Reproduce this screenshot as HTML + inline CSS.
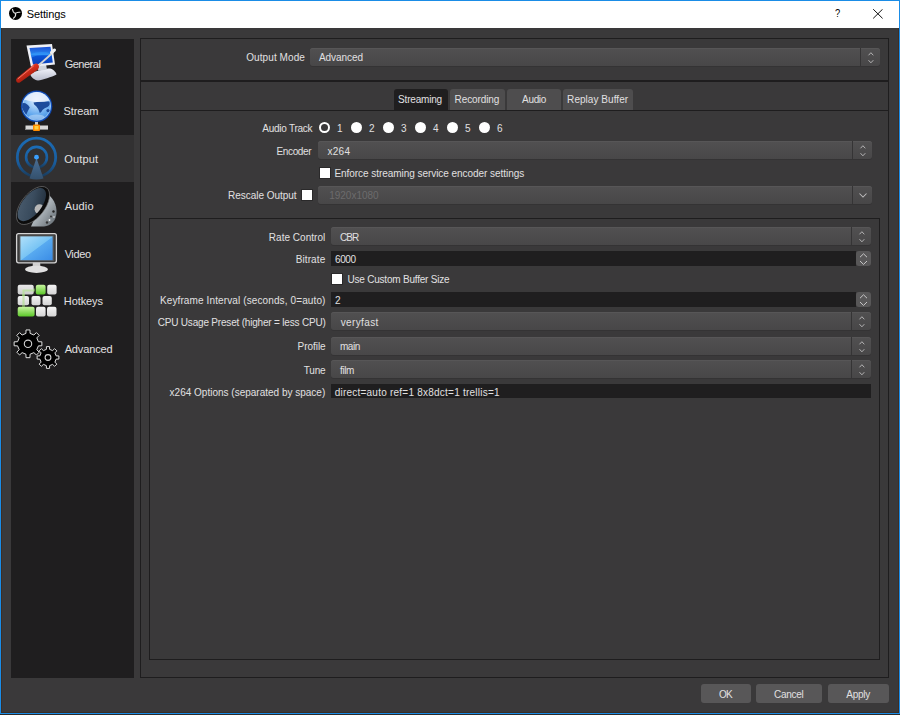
<!DOCTYPE html>
<html><head><meta charset="utf-8"><style>
*{margin:0;padding:0;box-sizing:border-box}
html,body{width:900px;height:715px;overflow:hidden;background:#2b2b2b}
body{position:relative;font-family:"Liberation Sans",sans-serif;color:#e1e0e1;font-size:10px}
.a{position:absolute}
.t{position:absolute;white-space:nowrap;line-height:1}
.r{text-align:right}
#win{left:0;top:0;width:900px;height:714px;border:1px solid #1a8ce6;background:#3a393a}
#title{left:1px;top:1px;width:898px;height:27px;background:#fff;color:#000}
#side{left:11px;top:39px;width:123px;height:639px;background:#1f1e1f}
.sel{position:absolute;left:11px;top:135px;width:123px;height:47px;background:#323132}
.box{position:absolute;border:1px solid #1e1d1e}
.combo{position:absolute;background:linear-gradient(#515051,#484748);border-radius:3px;box-shadow:inset 0 1px 0 #575657,0 1px 0 #343334}
.combo.dis{background:#403f40;box-shadow:none}
.spin{position:absolute;background:#1f1e1f}
.sbtn{position:absolute;background:#585758;border-radius:3px}
.cb{position:absolute;width:10px;height:10px;background:#fff;box-shadow:0 0 0 1px #2a292a}
.btn{position:absolute;background:#585758;border-radius:3px;top:684px;height:19px}
.tab{position:absolute;top:89px;height:21px;background:#4e4d4e;border-radius:3px 3px 0 0}
.tab.on{background:#1f1e1f}
.radio{position:absolute;top:122.3px;width:11px;height:11px;border-radius:50%;background:#fff}
.radio.on{background:transparent;border:2px solid #fff}
</style></head><body>
<div id="win" class="a"></div>
<div class="a" style="left:1px;top:28px;width:898px;height:685px;border:1px solid #3b2e26;border-top:0"></div>
<div id="title" class="a"></div>
<svg class="a" style="left:8px;top:6px" width="15" height="15" viewBox="0 0 15 15">
<circle cx="7.5" cy="7.4" r="6.5" fill="#000"/>
<path d="M4.5 3.2 Q4.7 6.3 7.5 7.4 Q9.6 6 12 6.3 M7.5 7.4 Q8.3 10.4 5.4 12.2" stroke="#e4e4e4" stroke-width="1.1" fill="none" stroke-linecap="round"/>
</svg>
<div class="t" id="Settings" style="left:26.84px;top:9px;font-size:11px;letter-spacing:-0.131px;color:#000;">Settings</div>
<div class="t" style="left:834.6px;top:8.3px;font-size:11px;color:#000;transform:scaleX(0.85);transform-origin:left">?</div>
<svg class="a" style="left:873px;top:9px" width="10" height="10" viewBox="0 0 10 10"><path d="M0.2 0.2L9.6 9.4M9.6 0.2L0.2 9.4" stroke="#111" stroke-width="1"/></svg>
<div id="side" class="a"></div>
<div class="sel"></div>
<div class="t" id="s_General" style="left:64.64px;top:59px;font-size:11px;letter-spacing:-0.478px;">General</div>
<div class="t" id="s_Stream" style="left:63.52px;top:106px;font-size:11px;letter-spacing:-0.13px;">Stream</div>
<div class="t" id="s_Output" style="left:64.32px;top:154px;font-size:11px;letter-spacing:0.142px;">Output</div>
<div class="t" id="s_Audio" style="left:64.64px;top:201px;font-size:11px;letter-spacing:0.21px;">Audio</div>
<div class="t" id="s_Video" style="left:64.64px;top:249px;font-size:11px;letter-spacing:-0.39px;">Video</div>
<div class="t" id="s_Hotkeys" style="left:63.84px;top:296px;font-size:11px;letter-spacing:-0.09px;">Hotkeys</div>
<div class="t" id="s_Advanced" style="left:64.64px;top:344px;font-size:11px;letter-spacing:-0.128px;">Advanced</div>
<svg class="a" style="left:0;top:0" width="140" height="400" viewBox="0 0 140 400">
<defs>
<linearGradient id="scr1" x1="0" y1="0" x2="0" y2="1"><stop offset="0" stop-color="#1a4fd6"/><stop offset="0.45" stop-color="#2a8cf0"/><stop offset="0.5" stop-color="#0a55d8"/><stop offset="1" stop-color="#0a3fb8"/></linearGradient>
<linearGradient id="red" x1="0" y1="0" x2="0.6" y2="1"><stop offset="0" stop-color="#ff8070"/><stop offset="0.45" stop-color="#d8301e"/><stop offset="1" stop-color="#8a1408"/></linearGradient>
<radialGradient id="globe" cx="0.4" cy="0.35" r="0.7"><stop offset="0" stop-color="#e8f3ff"/><stop offset="0.45" stop-color="#8cc4f4"/><stop offset="0.85" stop-color="#3e8ee0"/><stop offset="1" stop-color="#1456b8"/></radialGradient>
<linearGradient id="ring" x1="0" y1="0" x2="0" y2="1"><stop offset="0" stop-color="#1b6cb6"/><stop offset="0.65" stop-color="#195c9c"/><stop offset="1" stop-color="#1a3c5c"/></linearGradient>
<linearGradient id="cone" x1="0" y1="0" x2="0" y2="1"><stop offset="0" stop-color="#4a6f96"/><stop offset="1" stop-color="#34506c"/></linearGradient>
<linearGradient id="vscr" x1="0" y1="0" x2="1" y2="1"><stop offset="0" stop-color="#b0e0fa"/><stop offset="0.5" stop-color="#78c4f4"/><stop offset="0.52" stop-color="#58aaf0"/><stop offset="1" stop-color="#3a8ce6"/></linearGradient>
<linearGradient id="spk" x1="0" y1="1" x2="1" y2="0"><stop offset="0" stop-color="#4c5e70"/><stop offset="0.5" stop-color="#3a4c5e"/><stop offset="1" stop-color="#1e2a36"/></linearGradient>
<linearGradient id="key" x1="0" y1="0" x2="0" y2="1"><stop offset="0" stop-color="#f4f4f4"/><stop offset="1" stop-color="#d4d4d4"/></linearGradient>
<linearGradient id="gkey" x1="0" y1="0" x2="0" y2="1"><stop offset="0" stop-color="#c8f4a0"/><stop offset="1" stop-color="#5cc82a"/></linearGradient>
</defs>
<!-- General -->
<g>
<linearGradient id="base1" x1="0" y1="0" x2="0" y2="1"><stop offset="0" stop-color="#f0f2fa"/><stop offset="1" stop-color="#b8bccc"/></linearGradient>
<path d="M30 74 C34 71 46 68.5 50 68.5 C53 69 56 72 56.5 74.5 C52 77 42 80 38 80.5 C34 80 31 77 30 74Z" fill="url(#base1)"/>
<path d="M37 66 L46 64.5 L47 69.5 L38.5 71 Z" fill="#cfd3dc"/><circle cx="33.5" cy="69" r="3" fill="#c8ccd8"/>
<path d="M26.5 45.5 L52 44 L55 64.5 L31 67 Z" fill="#eef0f6"/>
<path d="M29.5 48 L50.5 46.8 L52.8 62.6 L33 64.6 Z" fill="url(#scr1)"/>
<path d="M30.5 54 Q40 50.5 51.5 53.5 L52 56 Q40 53.5 31.3 57.5Z" fill="#3aa0ff" opacity="0.45"/>
<path d="M39 65 L53 52.5" stroke="#d4d4d4" stroke-width="1.8" stroke-linecap="round"/>
<path d="M51.5 52.5 L54.5 50" stroke="#eee" stroke-width="3" stroke-linecap="round"/>
<path d="M17 78 L34 64.2 Q36.8 62.6 38.6 65 Q40 67.6 38 69.6 L20.2 82.2 Q17.6 83.6 16.3 81.2 Q15.6 79.2 17 78Z" fill="url(#red)"/>
<path d="M18.2 78.6 L33.5 66" stroke="#ffb0a0" stroke-width="1" stroke-linecap="round" opacity="0.6"/>
</g>
<!-- Stream -->
<g>
<radialGradient id="globe2" cx="0.5" cy="0.25" r="0.8"><stop offset="0" stop-color="#eaf3ff"/><stop offset="0.35" stop-color="#a8d0f8"/><stop offset="0.7" stop-color="#62a8ee"/><stop offset="1" stop-color="#3c88de"/></radialGradient>
<rect x="35" y="120" width="3" height="6" fill="#d0d0d0"/>
<rect x="25.5" y="125.5" width="22.5" height="4.5" fill="#d8d8d8"/>
<rect x="25.5" y="129" width="22.5" height="1" fill="#8a8a8a"/>
<rect x="33" y="124.5" width="7" height="6.5" rx="1" fill="#ff8a00"/>
<rect x="34.5" y="126" width="4" height="3.5" fill="#ffd040"/>
<circle cx="36.6" cy="106.3" r="15.7" fill="#1048b0"/>
<circle cx="36.6" cy="106.3" r="14.4" fill="url(#globe2)"/>
<circle cx="36.6" cy="106.3" r="13.9" fill="none" stroke="#e4f0ff" stroke-width="0.6" opacity="0.7"/>
<path d="M33.5 102.5 Q40 101 49.5 101.5 Q50.5 105.5 47.5 107 Q44.5 108 42.5 110 Q41 113 39.8 113 Q38.5 108.5 36.2 106.3 Q33.5 104.5 33.5 102.5Z" fill="#1d4c9c"/>
<path d="M22.3 103.2 Q26.5 102 29.8 107.5 Q28 110.5 26.2 114.8 Q23.2 111.5 22 107.5Z" fill="#1d4c9c"/>
<circle cx="48" cy="110.6" r="1.6" fill="#1d4c9c"/>
<path d="M24 99.5 Q30 92.5 37 92 Q45 92.5 49.5 100.5 Q43 102.5 36 102 Q29 101 24 99.5Z" fill="#eef2fc" opacity="0.8"/>
<ellipse cx="36.6" cy="117" rx="8" ry="2.5" fill="#ffffff" opacity="0.35"/>
</g>
<!-- Output -->
<g>
<circle cx="36.5" cy="157.3" r="19.2" fill="none" stroke="url(#ring)" stroke-width="2.8"/>
<circle cx="36.5" cy="157.3" r="10.4" fill="none" stroke="url(#ring)" stroke-width="2.6"/>
<path d="M36.5 158 L43.5 178.5 Q36.5 180.5 29.5 178.5 Z" fill="url(#cone)"/>
<circle cx="36.5" cy="157.2" r="2.4" fill="#3aa0ff"/>
</g>
<!-- Audio -->
<g>
<linearGradient id="hous" x1="0" y1="0" x2="1" y2="1"><stop offset="0" stop-color="#d8dee2"/><stop offset="0.5" stop-color="#aab2b8"/><stop offset="1" stop-color="#5a6268"/></linearGradient>
<path d="M46 193 C53 197 57 205 56.5 213 C56 221 51 226 44 226.5 L31 226.5 Z" fill="url(#hous)"/>
<circle cx="53.5" cy="211.5" r="1.2" fill="#222"/><circle cx="51" cy="216.5" r="1" fill="#333"/><circle cx="47" cy="222.5" r="1.2" fill="#333"/><circle cx="54" cy="217" r="0.8" fill="#eee"/><circle cx="49.5" cy="220" r="0.9" fill="#f4f4f4"/>
<ellipse cx="33" cy="205.5" rx="11.8" ry="22.3" transform="rotate(38 33 205.5)" fill="#0c0c0c" stroke="#7a7a7a" stroke-width="0.6"/>
<ellipse cx="31.8" cy="204.6" rx="9.6" ry="19.6" transform="rotate(38 31.8 204.6)" fill="url(#spk)"/>
<clipPath id="cclip"><ellipse cx="31.8" cy="204.6" rx="9.6" ry="19.6" transform="rotate(38 31.8 204.6)"/></clipPath>
<circle cx="39.5" cy="209.2" r="4.9" fill="#b8b8b8" clip-path="url(#cclip)"/>
</g>
<!-- Video -->
<g>
<path d="M33 262 L40 262 L40.5 267 L32.5 267 Z" fill="#d0d0d0"/>
<ellipse cx="36.5" cy="269.3" rx="11.5" ry="3.6" fill="#e0e0e0"/>
<rect x="16.6" y="233.6" width="39.8" height="29.2" rx="2" fill="#3c3c3c" stroke="#d4d4d4" stroke-width="1.3"/>
<rect x="19.2" y="235.6" width="34.6" height="25.2" fill="#5a5a5a"/>
<rect x="20.4" y="236.4" width="32.2" height="23.8" fill="url(#vscr)"/>
</g>
<!-- Hotkeys -->
<g>
<path d="M23.5 307 L23.5 290 L35 290" stroke="#8ad060" stroke-width="3" fill="none" opacity="0.6"/>
<rect x="17.7" y="284.8" width="16" height="9.6" rx="2" fill="url(#key)" opacity="0.95"/>
<rect x="35.8" y="284.8" width="9.8" height="9.6" rx="2" fill="url(#gkey)"/>
<rect x="47.2" y="284.8" width="9.4" height="9.6" rx="2" fill="url(#key)"/>
<rect x="17.7" y="296" width="11.3" height="9.2" rx="2" fill="url(#key)"/>
<rect x="31.5" y="296" width="9" height="9.2" rx="2" fill="url(#key)"/>
<rect x="42.5" y="296" width="9.3" height="9.2" rx="2" fill="url(#key)"/>
<rect x="17.7" y="306.8" width="16.9" height="9.6" rx="2" fill="url(#gkey)"/>
<rect x="36" y="306.8" width="9.6" height="9.6" rx="2" fill="url(#key)"/>
<rect x="47" y="306.8" width="9.5" height="9.6" rx="2" fill="url(#key)"/>
<path d="M23.5 305 L23.5 290.5 L34 290.5" stroke="#a8e080" stroke-width="2.2" fill="none" opacity="0.55"/>
</g>
<!-- Advanced -->
<g>
<path d="M38.40 341.73 L41.86 341.83 L41.86 345.77 L38.40 345.87 L36.81 349.69 L39.20 352.21 L36.41 355.00 L33.89 352.61 L30.07 354.20 L29.97 357.66 L26.03 357.66 L25.93 354.20 L22.11 352.61 L19.59 355.00 L16.80 352.21 L19.19 349.69 L17.60 345.87 L14.14 345.77 L14.14 341.83 L17.60 341.73 L19.19 337.91 L16.80 335.39 L19.59 332.60 L22.11 334.99 L25.93 333.40 L26.03 329.94 L29.97 329.94 L30.07 333.40 L33.89 334.99 L36.41 332.60 L39.20 335.39 L36.81 337.91Z" fill="#000" stroke="#e0e0e0" stroke-width="1" stroke-linejoin="round"/>
<circle cx="28" cy="343.8" r="3.7" fill="none" stroke="#d0d0d0" stroke-width="1.1"/>
<path d="M56.14 355.88 L58.89 355.95 L58.89 359.05 L56.14 359.12 L54.90 362.11 L56.80 364.10 L54.60 366.30 L52.61 364.40 L49.62 365.64 L49.55 368.39 L46.45 368.39 L46.38 365.64 L43.39 364.40 L41.40 366.30 L39.20 364.10 L41.10 362.11 L39.86 359.12 L37.11 359.05 L37.11 355.95 L39.86 355.88 L41.10 352.89 L39.20 350.90 L41.40 348.70 L43.39 350.60 L46.38 349.36 L46.45 346.61 L49.55 346.61 L49.62 349.36 L52.61 350.60 L54.60 348.70 L56.80 350.90 L54.90 352.89Z" fill="#000" stroke="#e0e0e0" stroke-width="1" stroke-linejoin="round"/>
<circle cx="48" cy="357.5" r="2.9" fill="none" stroke="#d0d0d0" stroke-width="1.1"/>
</g>
</svg>
<div class="box" style="left:140px;top:38px;width:749px;height:43px"></div>
<div class="t r" id="OutputMode" style="right:595.09px;top:53px;font-size:10px;letter-spacing:0.076px">Output Mode</div>
<div class="combo" style="left:310px;top:48px;width:570px;height:18px"></div><div class="a" style="left:860px;top:48px;width:1px;height:18px;background:#353435"></div><svg class="a" style="left:867px;top:50px" width="8" height="16" viewBox="0 0 8 16"><path d="M1.5 5.3L3.9 2.7L6.3 5.3M1.5 10.2L3.9 12.8L6.3 10.2" stroke="#b4b3b4" stroke-width="1" fill="none"/></svg>
<div class="t" id="AdvancedC" style="left:319.0px;top:53px;font-size:10px;letter-spacing:-0.071px;">Advanced</div>
<div class="box" style="left:140px;top:81px;width:749px;height:597px"></div>
<div class="tab on" style="left:394px;width:54px"></div><div class="t" id="Streaming" style="left:398.12px;top:95px;font-size:10px;letter-spacing:-0.19px;">Streaming</div>
<div class="tab" style="left:450px;width:55px"></div><div class="t" id="Recording" style="left:454.6px;top:95px;font-size:10px;letter-spacing:-0.11px;">Recording</div>
<div class="tab" style="left:507px;width:54px"></div><div class="t" id="AudioTab" style="left:522.08px;top:95px;font-size:10px;letter-spacing:-0.34px;">Audio</div>
<div class="tab" style="left:563px;width:70px"></div><div class="t" id="Replay" style="left:567.12px;top:95px;font-size:10px;letter-spacing:0.046px;">Replay Buffer</div>
<div class="a" style="left:141px;top:110px;width:747px;height:1px;background:#1e1d1e"></div>
<div class="t r" id="AudioTrack" style="right:587.64px;top:124px;font-size:10px;letter-spacing:-0.25px">Audio Track</div>
<div class="radio on" style="left:319px"></div><div class="t" id="r1" style="left:337px;top:124px;font-size:10px;letter-spacing:0px;">1</div>
<div class="radio" style="left:351px"></div><div class="t" id="r2" style="left:369px;top:124px;font-size:10px;letter-spacing:0px;">2</div>
<div class="radio" style="left:383px"></div><div class="t" id="r3" style="left:401px;top:124px;font-size:10px;letter-spacing:0px;">3</div>
<div class="radio" style="left:415px"></div><div class="t" id="r4" style="left:433px;top:124px;font-size:10px;letter-spacing:0px;">4</div>
<div class="radio" style="left:447px"></div><div class="t" id="r5" style="left:465px;top:124px;font-size:10px;letter-spacing:0px;">5</div>
<div class="radio" style="left:479px"></div><div class="t" id="r6" style="left:497px;top:124px;font-size:10px;letter-spacing:0px;">6</div>

<div class="t r" id="Encoder" style="right:588.88px;top:147px;font-size:10px;letter-spacing:-0.379px">Encoder</div>
<div class="combo" style="left:318px;top:141px;width:554px;height:18px"></div><div class="a" style="left:852px;top:141px;width:1px;height:18px;background:#353435"></div><svg class="a" style="left:859px;top:143px" width="8" height="16" viewBox="0 0 8 16"><path d="M1.5 5.3L3.9 2.7L6.3 5.3M1.5 10.2L3.9 12.8L6.3 10.2" stroke="#b4b3b4" stroke-width="1" fill="none"/></svg>
<div class="t" id="x264" style="left:327.48px;top:147px;font-size:10px;letter-spacing:0.272px;">x264</div>
<div class="cb" style="left:320px;top:168px"></div>
<div class="t" id="Enforce" style="left:334.44px;top:169px;font-size:10px;letter-spacing:-0.049px;">Enforce streaming service encoder settings</div>
<div class="t r" id="Rescale" style="right:603.42px;top:191px;font-size:10px;letter-spacing:-0.03px">Rescale Output</div>
<div class="cb" style="left:302px;top:190px"></div>
<div class="combo" style="left:318px;top:186px;width:554px;height:18px"></div><div class="a" style="left:852px;top:186px;width:1px;height:18px;background:#353435"></div><svg class="a" style="left:858px;top:192px" width="10" height="7" viewBox="0 0 10 7"><path d="M1.5 1.5L5 5L8.5 1.5" stroke="#bdbcbd" stroke-width="1.05" fill="none"/></svg>
<div class="t" id="1920" style="left:329.2px;top:191px;font-size:10px;letter-spacing:0.0px;color:#6c6b6c;">1920x1080</div>
<div class="box" style="left:149px;top:218px;width:731px;height:442px"></div>
<div class="t r" id="RateControl" style="right:574.74px;top:233px;font-size:10px;letter-spacing:0.027px">Rate Control</div>
<div class="combo" style="left:331px;top:227px;width:540px;height:18px"></div><div class="a" style="left:851px;top:227px;width:1px;height:18px;background:#353435"></div><svg class="a" style="left:858px;top:229px" width="8" height="16" viewBox="0 0 8 16"><path d="M1.5 5.3L3.9 2.7L6.3 5.3M1.5 10.2L3.9 12.8L6.3 10.2" stroke="#b4b3b4" stroke-width="1" fill="none"/></svg>
<div class="t" id="CBR" style="left:340.0px;top:233px;font-size:10px;letter-spacing:-0.9px;">CBR</div>
<div class="t r" id="Bitrate" style="right:574.68px;top:255px;font-size:10px;letter-spacing:0.1px">Bitrate</div>
<div class="spin" style="left:331px;top:251px;width:525px;height:15px"></div><div class="sbtn" style="left:856px;top:251px;width:15px;height:15px"></div><svg class="a" style="left:859px;top:252px" width="9" height="13" viewBox="0 0 9 13"><path d="M1 5.2L4.5 1.8L8 5.2M1 9L4.5 12.4L8 9" stroke="#c8c7c8" stroke-width="1" fill="none"/></svg>
<div class="t" id="6000" style="left:335.0px;top:255px;font-size:10px;letter-spacing:-0.405px;">6000</div>
<div class="cb" style="left:332px;top:274px"></div>
<div class="t" id="UseCustom" style="left:347.4px;top:275px;font-size:10px;letter-spacing:-0.204px;">Use Custom Buffer Size</div>
<div class="t r" id="Keyframe" style="right:574.46px;top:296px;font-size:10px;letter-spacing:0.118px">Keyframe Interval (seconds, 0=auto)</div>
<div class="spin" style="left:331px;top:292px;width:525px;height:15px"></div><div class="sbtn" style="left:856px;top:292px;width:15px;height:15px"></div><svg class="a" style="left:859px;top:293px" width="9" height="13" viewBox="0 0 9 13"><path d="M1 5.2L4.5 1.8L8 5.2M1 9L4.5 12.4L8 9" stroke="#c8c7c8" stroke-width="1" fill="none"/></svg>
<div class="t" id="two" style="left:335px;top:296px;font-size:10px;letter-spacing:0px;">2</div>
<div class="t r" id="CPU" style="right:574.45px;top:318px;font-size:10px;letter-spacing:-0.192px">CPU Usage Preset (higher = less CPU)</div>
<div class="combo" style="left:331px;top:312px;width:540px;height:18px"></div><div class="a" style="left:851px;top:312px;width:1px;height:18px;background:#353435"></div><svg class="a" style="left:858px;top:314px" width="8" height="16" viewBox="0 0 8 16"><path d="M1.5 5.3L3.9 2.7L6.3 5.3M1.5 10.2L3.9 12.8L6.3 10.2" stroke="#b4b3b4" stroke-width="1" fill="none"/></svg>
<div class="t" id="veryfast" style="left:340.64px;top:318px;font-size:10px;letter-spacing:0.381px;">veryfast</div>
<div class="t r" id="Profile" style="right:574.39px;top:342px;font-size:10px;letter-spacing:-0.033px">Profile</div>
<div class="combo" style="left:331px;top:337px;width:540px;height:18px"></div><div class="a" style="left:851px;top:337px;width:1px;height:18px;background:#353435"></div><svg class="a" style="left:858px;top:339px" width="8" height="16" viewBox="0 0 8 16"><path d="M1.5 5.3L3.9 2.7L6.3 5.3M1.5 10.2L3.9 12.8L6.3 10.2" stroke="#b4b3b4" stroke-width="1" fill="none"/></svg>
<div class="t" id="main" style="left:340.0px;top:342px;font-size:10px;letter-spacing:-0.467px;">main</div>
<div class="t r" id="Tune" style="right:574.49px;top:366px;font-size:10px;letter-spacing:-0.167px">Tune</div>
<div class="combo" style="left:331px;top:360px;width:540px;height:18px"></div><div class="a" style="left:851px;top:360px;width:1px;height:18px;background:#353435"></div><svg class="a" style="left:858px;top:362px" width="8" height="16" viewBox="0 0 8 16"><path d="M1.5 5.3L3.9 2.7L6.3 5.3M1.5 10.2L3.9 12.8L6.3 10.2" stroke="#b4b3b4" stroke-width="1" fill="none"/></svg>
<div class="t" id="film" style="left:340.0px;top:366px;font-size:10px;letter-spacing:-0.399px;">film</div>
<div class="t r" id="x264opt" style="right:574.76px;top:388px;font-size:10px;letter-spacing:0.0px">x264 Options (separated by space)</div>
<div class="spin" style="left:331px;top:384px;width:540px;height:14px"></div>
<div class="t" id="optval" style="left:334.64px;top:388px;font-size:10px;letter-spacing:0.234px;">direct=auto ref=1 8x8dct=1 trellis=1</div>
<div class="btn" style="left:701px;width:50px"></div><div class="t" id="OK" style="left:719.0px;top:690px;font-size:10px;letter-spacing:-0.9px;">OK</div>
<div class="btn" style="left:756px;width:66px"></div><div class="t" id="Cancel" style="left:774.0px;top:690px;font-size:10px;letter-spacing:-0.268px;">Cancel</div>
<div class="btn" style="left:828px;width:61px"></div><div class="t" id="Apply" style="left:846.24px;top:690px;font-size:10px;letter-spacing:-0.22px;">Apply</div>
</body></html>
